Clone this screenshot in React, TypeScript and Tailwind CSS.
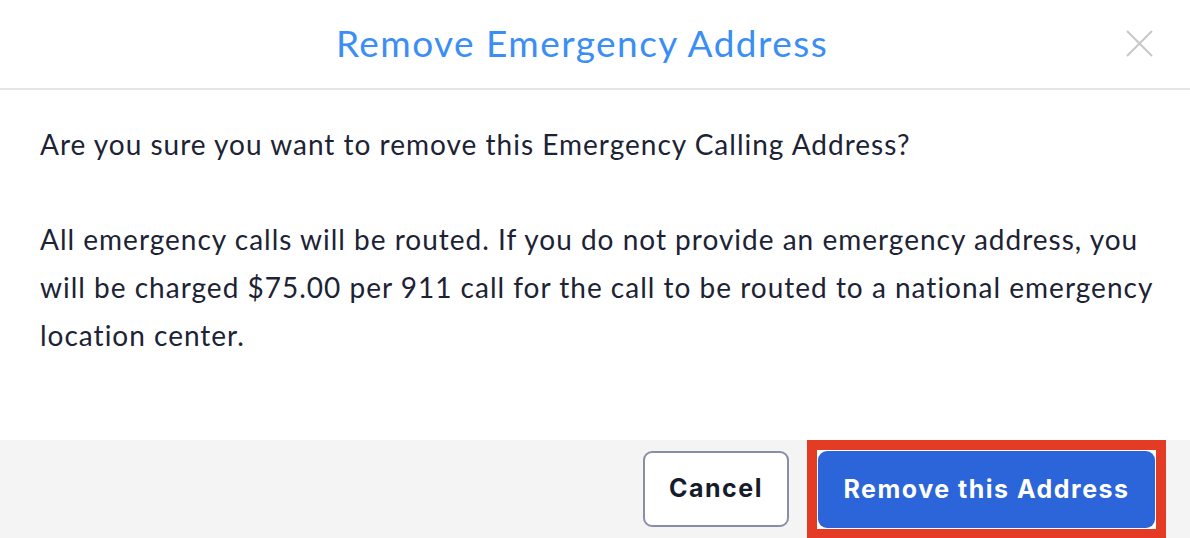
export default function App() {
  return (
    <div className="flex h-[538px] w-full flex-col overflow-hidden bg-white font-['Lato',sans-serif] text-[#1c2335]">
      <div className="relative flex h-[90px] shrink-0 items-center justify-center border-b-2 border-[#e6e6e6] pb-1 pr-[26px]">
        <h2 className="text-[37px] leading-none tracking-[1.45px] text-[#3b8ef5]">Remove Emergency Address</h2>
        <button className="absolute right-[37px] top-[30px] text-[#c8c8c8]">
          <svg width="27" height="27" viewBox="0 0 27 27" fill="none" stroke="currentColor" strokeWidth="2">
            <path d="M1 1L26 26M26 1L1 26" />
          </svg>
        </button>
      </div>

      <div className="flex-1 pl-10 pr-9 pt-[30px] text-[28px] leading-[48px] tracking-[1px]">
        <p className="mb-[47px]">Are you sure you want to remove this Emergency Calling Address?</p>
        <p>
          All emergency calls will be routed. If you do not provide an emergency address, you will be charged
          $75.00 per 911 call for the call to be routed to a national emergency location center.
        </p>
      </div>

      <div className="flex h-[98px] shrink-0 items-start justify-end gap-[18px] bg-[#f4f4f4] pr-6 font-['Inter',sans-serif] tracking-[1.5px]">
        <button className="mt-[11px] h-[76px] w-[146px] rounded-[9px] border-2 border-[#878ea8] bg-white text-[25px] font-bold text-[#161c2b]">
          Cancel
        </button>
        <div className="h-[99px] border-[10px] border-[#e43b25] bg-white p-px">
          <button className="h-[77px] w-[337px] rounded-[9px] bg-[#2b65d9] text-[25px] font-bold text-white">
            Remove this Address
          </button>
        </div>
      </div>
    </div>
  )
}
